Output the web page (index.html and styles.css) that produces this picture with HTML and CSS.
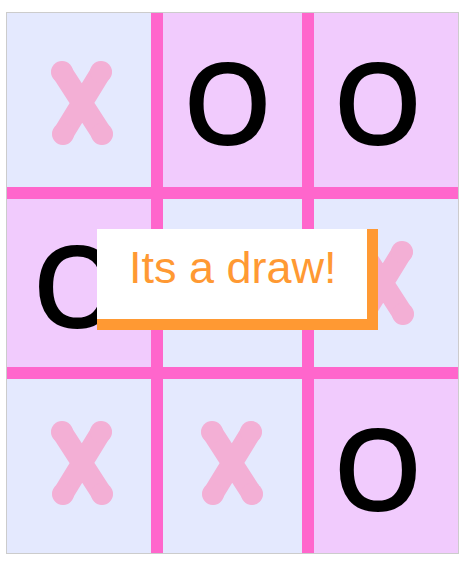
FILE: index.html
```html
<!DOCTYPE html>
<html lang="en">
<head>
<meta charset="utf-8">
<title>Tic Tac Toe</title>
<link rel="stylesheet" href="styles.css">
</head>
<body>
<div class="game">
  <div class="board">
    <div class="cell x r1 c1"><svg class="xmark" viewBox="0 0 62 84" width="62" height="84"><path d="M11 11 L51 73 M50 11 L12 73"/><circle cx="11" cy="11" r="11"/><circle cx="50" cy="11" r="11"/><circle cx="12" cy="73" r="11"/><circle cx="51" cy="73" r="11"/></svg></div>
    <div class="cell o r1 c2"><span class="omark">O</span></div>
    <div class="cell o r1 c3"><span class="omark">O</span></div>
    <div class="cell o r2 c1"><span class="omark">O</span></div>
    <div class="cell x r2 c2"><svg class="xmark" viewBox="0 0 62 84" width="62" height="84"><path d="M11 11 L51 73 M50 11 L12 73"/><circle cx="11" cy="11" r="11"/><circle cx="50" cy="11" r="11"/><circle cx="12" cy="73" r="11"/><circle cx="51" cy="73" r="11"/></svg></div>
    <div class="cell x r2 c3"><svg class="xmark" viewBox="0 0 62 84" width="62" height="84"><path d="M11 11 L51 73 M50 11 L12 73"/><circle cx="11" cy="11" r="11"/><circle cx="50" cy="11" r="11"/><circle cx="12" cy="73" r="11"/><circle cx="51" cy="73" r="11"/></svg></div>
    <div class="cell x r3 c1"><svg class="xmark" viewBox="0 0 62 84" width="62" height="84"><path d="M11 11 L51 73 M50 11 L12 73"/><circle cx="11" cy="11" r="11"/><circle cx="50" cy="11" r="11"/><circle cx="12" cy="73" r="11"/><circle cx="51" cy="73" r="11"/></svg></div>
    <div class="cell x r3 c2"><svg class="xmark" viewBox="0 0 62 84" width="62" height="84"><path d="M11 11 L51 73 M50 11 L12 73"/><circle cx="11" cy="11" r="11"/><circle cx="50" cy="11" r="11"/><circle cx="12" cy="73" r="11"/><circle cx="51" cy="73" r="11"/></svg></div>
    <div class="cell o r3 c3"><span class="omark">O</span></div>
  </div>
  <div class="result">Its a draw!</div>
</div>
</body>
</html>
```
FILE: styles.css
```css
html, body {
  margin: 0;
  padding: 0;
  background: #ffffff;
}

.game {
  position: relative;
  width: 453px;
  margin: 12px 0 0 6px;
}

.board {
  display: grid;
  grid-template-columns: repeat(3, 1fr);
  grid-template-rows: repeat(3, 180px);
  width: 451px;
  border: 1px solid #cccccc;
}

.cell {
  box-sizing: border-box;
  display: flex;
  align-items: center;
  justify-content: center;
  border: 0 solid #ff66cc;
  overflow: hidden;
}

.cell.x { background: #e4e9fe; }
.cell.o { background: #f1cbfd; }

.c1 { border-right-width: 6px; }
.c2 { border-left-width: 6px; border-right-width: 6px; }
.c3 { border-left-width: 6px; }
.r1 { border-bottom-width: 6px; }
.r2 { border-top-width: 6px; border-bottom-width: 6px; }
.r3 { border-top-width: 6px; }

.c1.x { padding-left: 6px; }
.c3.x { padding-right: 6px; }
.r1.x { padding-top: 6px; }
.r3.x { padding-bottom: 6px; }

.xmark {
  display: block;
}

.xmark path {
  fill: none;
  stroke: #f3afd5;
  stroke-width: 21;
  stroke-linecap: round;
  stroke-linejoin: round;
}

.xmark circle {
  fill: #f3afd5;
}

.omark {
  font-family: "Open Sans", "DejaVu Sans", sans-serif;
  font-size: 114px;
  font-weight: 600;
  line-height: normal;
  color: #000000;
  letter-spacing: 10px;
}

.c1 .omark { padding-left: 6px; }
.c3 .omark { padding-right: 6px; }

.result {
  position: absolute;
  left: 91px;
  top: 217px;
  width: 238px;
  height: 77px;
  padding: 13px 0 0 32px;
  background: #ffffff;
  border-right: 11px solid #ff9933;
  border-bottom: 11px solid #ff9933;
  font-family: "Liberation Sans", Arial, sans-serif;
  font-size: 45px;
  line-height: normal;
  color: #ff9933;
  white-space: nowrap;
}
```
